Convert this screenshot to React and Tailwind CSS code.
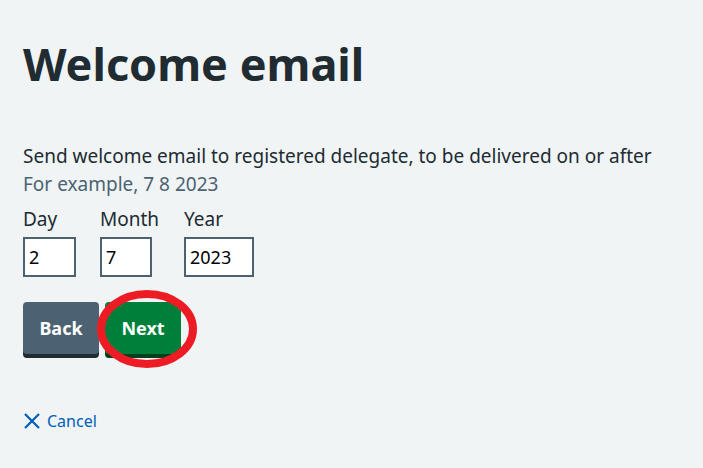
import { useState } from 'react';

function DateField({ label, value, width, col, onChange }) {
  return (
    <div className={`flex flex-col ${col}`}>
      <label className="text-[19px] leading-[26px] mb-[5px]">{label}</label>
      <input
        className={`${width} h-[40px] border-2 border-[#4c6272] bg-white px-[4px] text-[18px] text-black outline-none`}
        value={value}
        onChange={e => onChange(e.target.value)}
      />
    </div>
  );
}

export default function App() {
  const [day, setDay] = useState('2');
  const [month, setMonth] = useState('7');
  const [year, setYear] = useState('2023');

  return (
    <div
      className="min-h-[468px] bg-[#f0f4f5] text-[#212b32] px-[23px] pt-[33px]"
      style={{ fontFamily: '"Noto Sans", "Open Sans", sans-serif' }}
    >
      <h1 className="text-[45px] font-bold leading-[62px] mb-[47px]">Welcome email</h1>

      <p className="text-[19px] leading-[28px]">
        Send welcome email to registered delegate, to be delivered on or after
      </p>
      <p className="text-[19px] leading-[28px] text-[#4c6272] mb-[8px]">For example, 7 8 2023</p>

      <div className="flex">
        <DateField label="Day" value={day} width="w-[53px]" col="w-[77px]" onChange={setDay} />
        <DateField label="Month" value={month} width="w-[52px]" col="w-[84px]" onChange={setMonth} />
        <DateField label="Year" value={year} width="w-[70px]" col="w-[70px]" onChange={setYear} />
      </div>

      <div className="flex gap-[6px] mt-[25px]">
        <button className="w-[76px] h-[52px] rounded-[4px] bg-[#4c6272] text-white font-bold text-[18px] shadow-[0_4px_0_#212b32]">
          Back
        </button>
        <div className="relative">
          <button className="w-[76px] h-[52px] rounded-[4px] bg-[#007f3b] text-white font-bold text-[18px] shadow-[0_4px_0_#00401e]">
            Next
          </button>
          <svg className="absolute left-[-9px] top-[-13px] pointer-events-none" width="102" height="80" viewBox="0 0 102 80">
            <ellipse cx="51" cy="40" rx="46" ry="35" fill="none" stroke="#ed1c24" strokeWidth="8" />
          </svg>
        </div>
      </div>

      <a href="#" className="flex items-center gap-[6px] mt-[55px] text-[16px] text-[#005eb8] w-fit">
        <svg width="18" height="18" viewBox="0 0 18 18">
          <path d="M2 2 L16 16 M16 2 L2 16" stroke="#005eb8" strokeWidth="2.2" />
        </svg>
        Cancel
      </a>
    </div>
  );
}
